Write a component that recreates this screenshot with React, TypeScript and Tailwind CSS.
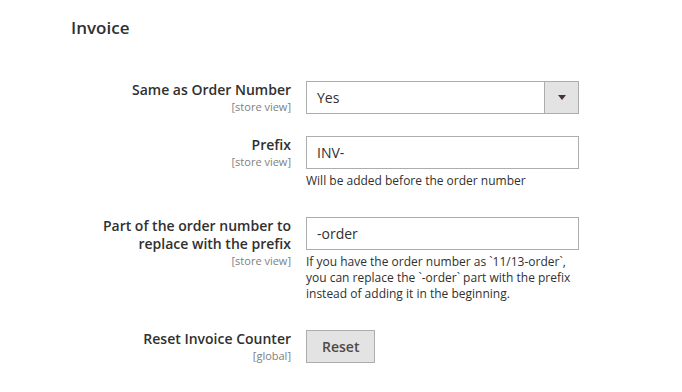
import React from 'react';

const font = { fontFamily: '"Open Sans", Arial, sans-serif' };

function Field({ label, scope, children }: { label: string; scope: string; children: React.ReactNode }) {
  return (
    <div className="flex gap-[15px]">
      <div className="w-[220px] shrink-0 text-right">
        <div className="text-[14px] leading-[18px] font-semibold text-[#303030]">{label}</div>
        <div className="text-[11px] leading-[15px] text-[#808080]">{scope}</div>
      </div>
      <div className="w-[273px]">{children}</div>
    </div>
  );
}

function TextInput({ value }: { value: string }) {
  return (
    <div className="h-[33px] border border-[#adadad] bg-white pl-[10px] flex items-center text-[14px] text-[#303030]">
      {value}
    </div>
  );
}

function Note({ children }: { children: React.ReactNode }) {
  return <div className="mt-[4px] pb-[6px] text-[12px] leading-[16px] text-[#303030]">{children}</div>;
}

export default function App() {
  return (
    <div className="w-[682px] h-[392px] bg-white pl-[71px] pt-[16px]" style={font}>
      <h2 className="text-[17px] leading-[24px] font-semibold text-[#303030]">Invoice</h2>

      <div className="mt-[41px] flex flex-col gap-[22px]">
        <Field label="Same as Order Number" scope="[store view]">
          <div className="h-[33px] border border-[#adadad] bg-white flex items-stretch text-[14px] text-[#303030]">
            <div className="flex-1 pl-[10px] flex items-center">Yes</div>
            <div className="w-[34px] bg-[#e3e3e3] border-l border-[#adadad] flex items-center justify-center">
              <svg width="8" height="5" viewBox="0 0 8 5">
                <path d="M0 0h8L4 5z" fill="#41362f" />
              </svg>
            </div>
          </div>
        </Field>

        <Field label="Prefix" scope="[store view]">
          <TextInput value="INV-" />
          <Note>Will be added before the order number</Note>
        </Field>

        <Field label="Part of the order number to replace with the prefix" scope="[store view]">
          <TextInput value="-order" />
          <Note>
            If you have the order number as `11/13-order`, you can replace the `-order` part with the prefix instead of
            adding it in the beginning.
          </Note>
        </Field>

        <Field label="Reset Invoice Counter" scope="[global]">
          <button className="h-[33px] px-[15px] border border-[#adadad] bg-[#e3e3e3] text-[14px] font-semibold text-[#514943]">
            Reset
          </button>
        </Field>
      </div>
    </div>
  );
}
